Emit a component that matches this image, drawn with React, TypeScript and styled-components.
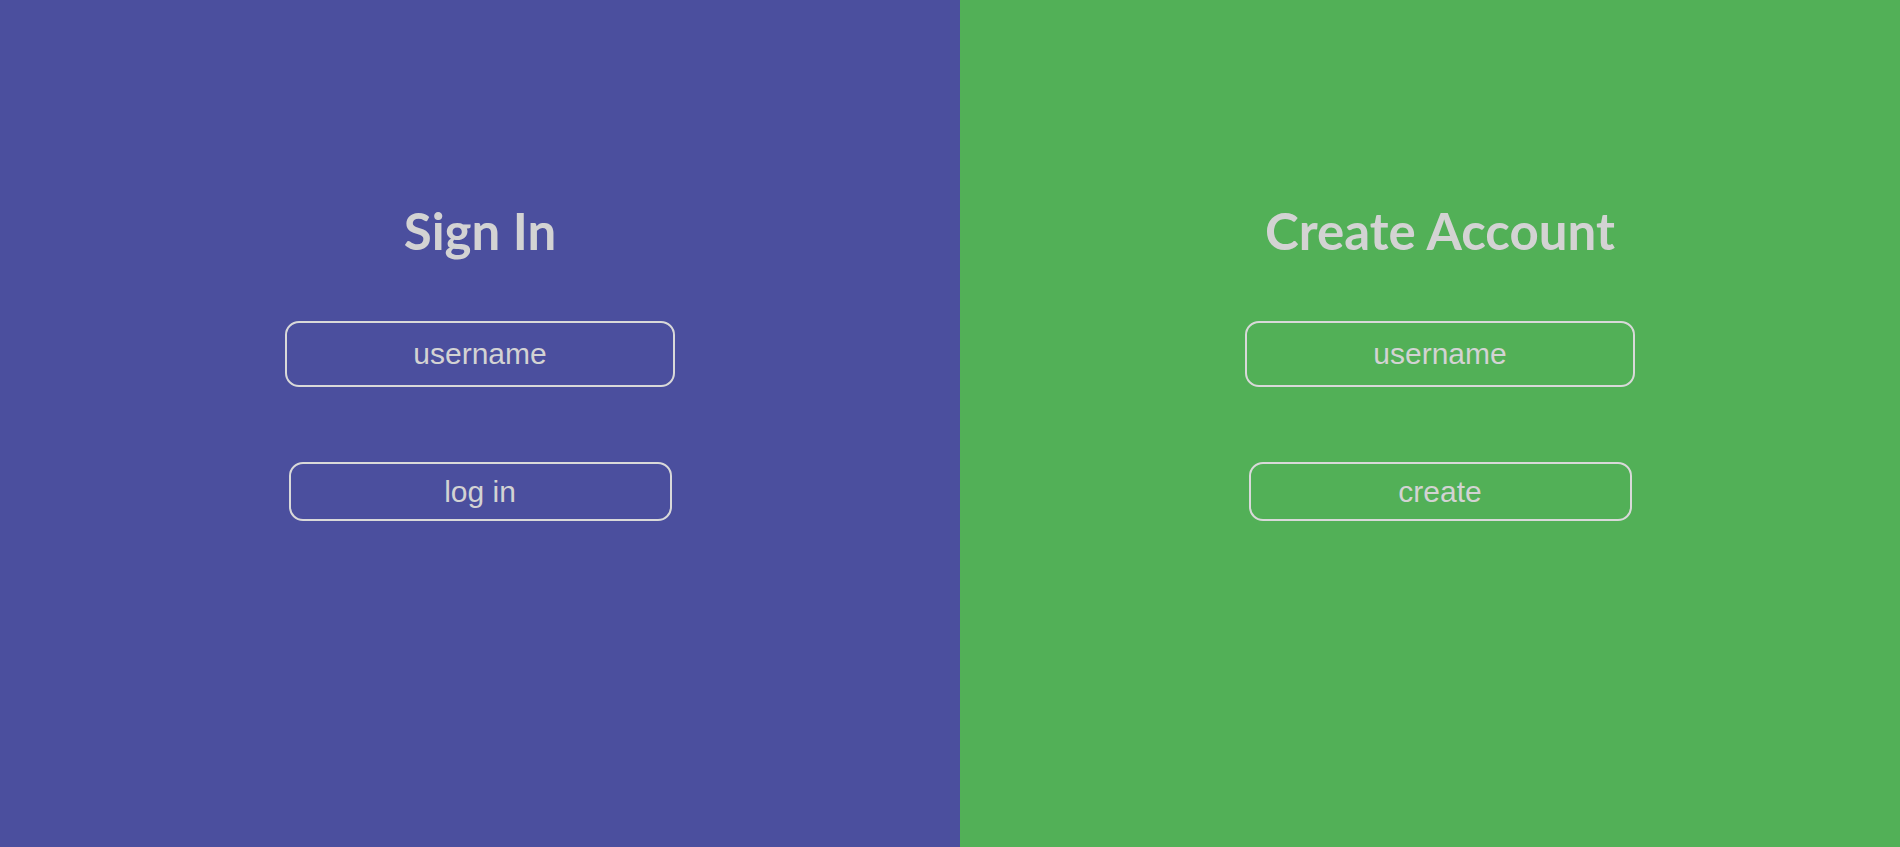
import React from "react";
import styled, { createGlobalStyle } from "styled-components";

const GlobalStyle = createGlobalStyle`
  html, body {
    margin: 0;
    padding: 0;
    height: 100%;
    overflow: hidden;
  }
  body {
    font-family: "Liberation Sans", Arial, sans-serif;
  }
  #root {
    height: 100%;
  }
`;

const Page = styled.div`
  display: grid;
  grid-template-columns: 960px 960px;
  width: 1920px;
  height: 847px;
`;

const Panel = styled.section<{ $bg: string }>`
  display: flex;
  flex-direction: column;
  align-items: center;
  padding-top: 201px;
  background: ${(p) => p.$bg};
  box-sizing: border-box;
`;

const Title = styled.h1`
  margin: 0;
  height: 60px;
  line-height: 60px;
  font-family: Lato, "Open Sans", sans-serif;
  font-weight: 700;
  font-size: 51px;
  color: #d3d3d3;
`;

const Field = styled.input`
  margin-top: 60px;
  width: 390px;
  height: 66px;
  box-sizing: border-box;
  border: 2px solid #d9d9d9;
  border-radius: 14px;
  background: transparent;
  color: #d3d3d3;
  font-family: "Liberation Sans", Arial, sans-serif;
  font-size: 30px;
  text-align: center;
  outline: none;
  padding: 0 10px;

  &::placeholder {
    color: #d3d3d3;
    opacity: 1;
  }
`;

const Action = styled.button`
  margin-top: 75px;
  width: 383px;
  height: 59px;
  box-sizing: border-box;
  border: 2px solid #d9d9d9;
  border-radius: 14px;
  background: transparent;
  color: #d3d3d3;
  font-family: "Liberation Sans", Arial, sans-serif;
  font-size: 30px;
  cursor: pointer;
  padding: 0;
`;

export default function App() {
  return (
    <>
      <GlobalStyle />
      <Page>
        <Panel $bg="#4b4f9e">
          <Title>Sign In</Title>
          <Field placeholder="username" />
          <Action>log in</Action>
        </Panel>
        <Panel $bg="#52b057">
          <Title>Create Account</Title>
          <Field placeholder="username" />
          <Action>create</Action>
        </Panel>
      </Page>
    </>
  );
}
